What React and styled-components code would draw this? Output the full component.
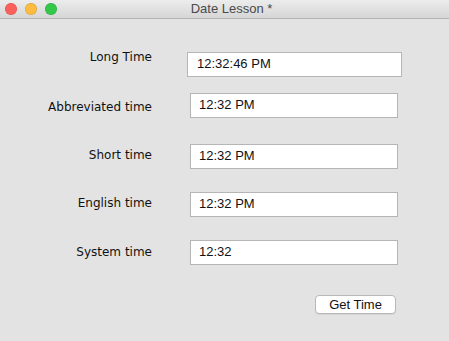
import styled, { createGlobalStyle } from "styled-components";

const GlobalStyle = createGlobalStyle`
  html, body {
    margin: 0;
    padding: 0;
    background: #e3e3e3;
  }
  body {
    font-family: "DejaVu Sans", "Liberation Sans", sans-serif;
  }
`;

const Window = styled.div`
  width: 449px;
  min-height: 341px;
  background: #e3e3e3;
  display: flex;
  flex-direction: column;
`;

const TitleBar = styled.div`
  height: 18px;
  border-bottom: 1px solid #b4b4b4;
  background: linear-gradient(#ececec, #d6d6d6);
  display: flex;
  align-items: center;
`;

const Lights = styled.div`
  display: flex;
  gap: 8px;
  padding-left: 5px;
`;

const Light = styled.span`
  width: 12px;
  height: 12px;
  border-radius: 50%;
  background: ${(p) => p.$color};
  box-shadow: inset 0 0 0 0.5px rgba(0, 0, 0, 0.18);
`;

const Title = styled.div`
  flex: 1;
  text-align: center;
  font-family: "Liberation Sans", Arial, sans-serif;
  font-size: 13px;
  color: #4a4a4a;
  padding-right: 43px;
  line-height: 18px;
`;

const Content = styled.div`
  padding-top: 33px;
  display: flex;
  flex-direction: column;
`;

const Row = styled.div`
  display: grid;
  grid-template-columns: 152px auto;
  align-items: start;
  margin-top: ${(p) => p.$gap}px;
`;

const Label = styled.div`
  text-align: right;
  font-size: 12px;
  line-height: 16px;
  color: #111;
  margin-top: ${(p) => p.$offset}px;
`;

const Field = styled.div`
  box-sizing: border-box;
  width: ${(p) => p.$width}px;
  height: 25px;
  margin-left: ${(p) => p.$left}px;
  background: #fff;
  border: 1px solid #b6b6b6;
  padding: 3px 0 0 ${(p) => p.$pad}px;
  font-family: "Liberation Sans", Arial, sans-serif;
  font-size: 13px;
  line-height: 16px;
  color: #111;
`;

const Actions = styled.div`
  display: flex;
  justify-content: flex-end;
  padding-right: 53px;
  margin-top: 30px;
`;

const Button = styled.button`
  box-sizing: border-box;
  width: 81px;
  height: 19px;
  padding: 0;
  background: #fff;
  border: 1px solid #b8b8b8;
  border-radius: 4px;
  font-family: "Liberation Sans", Arial, sans-serif;
  font-size: 13px;
  color: #111;
  box-shadow: 0 1px 0 rgba(0, 0, 0, 0.06);
`;

const rows = [
  { label: "Long Time", value: "12:32:46 PM", gap: 0, offset: -3, left: 35, width: 215, pad: 9 },
  { label: "Abbreviated time", value: "12:32 PM", gap: 16, offset: 6, left: 38, width: 208, pad: 8 },
  { label: "Short time", value: "12:32 PM", gap: 26, offset: 3, left: 38, width: 208, pad: 8 },
  { label: "English time", value: "12:32 PM", gap: 23, offset: 3, left: 38, width: 208, pad: 8 },
  { label: "System time", value: "12:32", gap: 23, offset: 4, left: 38, width: 208, pad: 8 },
];

const App = () => {
  return (
    <Window>
      <GlobalStyle />
      <TitleBar>
        <Lights>
          <Light $color="#fc605c" />
          <Light $color="#fdbc40" />
          <Light $color="#34c84a" />
        </Lights>
        <Title>Date Lesson *</Title>
      </TitleBar>
      <Content>
        {rows.map((r) => (
          <Row key={r.label} $gap={r.gap}>
            <Label $offset={r.offset}>{r.label}</Label>
            <Field $left={r.left} $width={r.width} $pad={r.pad}>
              {r.value}
            </Field>
          </Row>
        ))}
        <Actions>
          <Button>Get Time</Button>
        </Actions>
      </Content>
    </Window>
  );
};

export default App;
